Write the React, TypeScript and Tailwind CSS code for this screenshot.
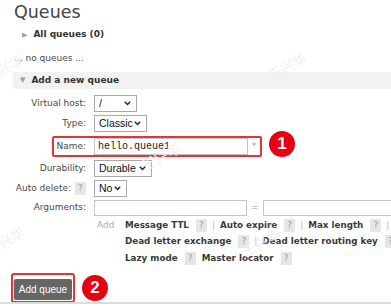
const args = [
  [
    { name: "Message TTL", sep: true },
    { name: "Auto expire", sep: true },
    { name: "Max length", sep: true },
  ],
  [
    { name: "Dead letter exchange", sep: true },
    { name: "Dead letter routing key", sep: false },
  ],
  [
    { name: "Lazy mode", sep: false },
    { name: "Master locator", sep: false },
  ],
];

const marks = [
  { x: -18, y: 58 },
  { x: 266, y: 56 },
  { x: 140, y: 146 },
  { x: -16, y: 230 },
  { x: 240, y: 232 },
];

function Help() {
  return (
    <span className="inline-flex shrink-0 items-center justify-center w-[11px] h-[13px] bg-[#e6e6e6] text-[#9a9a9a] text-[9px] font-normal">
      ?
    </span>
  );
}

function Chevron() {
  return (
    <svg width="7" height="5" viewBox="0 0 7 5" className="shrink-0">
      <path d="M0.8 0.8 L3.5 3.6 L6.2 0.8" fill="none" stroke="#222" strokeWidth="1.4" />
    </svg>
  );
}

function Select({ value, width }: { value: string; width: string }) {
  return (
    <div
      className={`${width} h-[17px] border border-[#a9a9a9] bg-white flex items-center justify-between pl-[4px] pr-[5px] font-['Liberation_Sans',Arial,sans-serif] text-[10.5px] text-[#111]`}
    >
      <span>{value}</span>
      <Chevron />
    </div>
  );
}

function Row({
  label,
  help,
  top,
  children,
}: {
  label: string;
  help?: boolean;
  top: string;
  children: React.ReactNode;
}) {
  return (
    <div className={`flex items-center ${top}`}>
      <div className="w-[86px] shrink-0 flex justify-end items-center gap-[4px] text-[9px] text-[#484848]">
        <span>{label}</span>
        {help && <Help />}
      </div>
      <div className="ml-[8px] flex items-center shrink-0">{children}</div>
    </div>
  );
}

export default function App() {
  return (
    <div className="relative w-[391px] h-[306px] overflow-hidden bg-white font-['Verdana','DejaVu_Sans',sans-serif] text-[#484848]">
      {/* watermark */}
      {marks.map((m, i) => (
        <span
          key={i}
          className="absolute pointer-events-none text-[14px] text-[#efefef] -rotate-[28deg] font-['Noto_Sans_CJK_SC',sans-serif] z-10"
          style={{ left: m.x, top: m.y }}
        >
          王兴华
        </span>
      ))}

      <div className="pl-[14px]">
        <h1 className="text-[17.5px] leading-[22px] pt-[1px] text-[#444]">Queues</h1>
        <div className="flex items-center h-[16px] mt-[4px] pl-[8px] gap-[6px]">
          <span className="text-[7px] text-[#a0a0a0]">&#9654;</span>
          <span className="text-[9px] font-bold text-[#333]">All queues (0)</span>
        </div>
        <p className="mt-[8px] h-[14px] text-[9px] leading-[14px]">... no queues ...</p>
      </div>

      <div className="ml-[13px] mt-[7px] h-[17px] bg-[#f2f2f2] flex items-center pl-[7px] gap-[6px]">
        <span className="text-[7px] text-[#a0a0a0]">&#9660;</span>
        <span className="text-[9px] font-bold text-[#333]">Add a new queue</span>
      </div>

      <Row label="Virtual host:" top="mt-[6px]">
        <Select value="/" width="w-[43px]" />
      </Row>
      <Row label="Type:" top="mt-[3px]">
        <Select value="Classic" width="w-[53px]" />
      </Row>
      <div className="relative mt-[6px]">
        <Row label="Name:" top="mt-0">
          <div className="w-[154px] h-[17px] border border-[#c4c4c4] bg-white flex items-center pl-[3px] font-['Liberation_Mono',monospace] text-[10px] text-[#222]">
            hello.queue1
          </div>
          <span className="ml-[4px] text-[9px] text-[#f08080]">*</span>
        </Row>
        <div className="absolute left-[52px] top-[-2px] w-[210px] h-[21px] border-2 border-[#e0363a] rounded-[2px]" />
        <div className="absolute left-[269px] top-[-7px] w-[26px] h-[26px] rounded-full bg-[#e60012] flex items-center justify-center text-white font-bold text-[17px] font-['Liberation_Sans',Arial,sans-serif]">
          1
        </div>
      </div>
      <Row label="Durability:" top="mt-[5px]">
        <Select value="Durable" width="w-[58px]" />
      </Row>
      <Row label="Auto delete:" help top="mt-[3px]">
        <Select value="No" width="w-[33px]" />
      </Row>
      <Row label="Arguments:" top="mt-[3px]">
        <div className="w-[153px] h-[16px] border border-[#c4c4c4] bg-white" />
        <span className="mx-[4px] text-[9px] text-[#999]">=</span>
        <div className="w-[140px] h-[16px] border border-[#c4c4c4] bg-white" />
      </Row>

      <div className="mt-[1px] flex">
        <div className="w-[97px] shrink-0" />
        <span className="shrink-0 text-[9px] text-[#aaa] h-[17px] leading-[17px] w-[28px]">Add</span>
        <div className="flex flex-col shrink-0">
          {args.map((row, r) => (
            <div key={r} className="h-[16.5px] flex items-center whitespace-nowrap text-[8.75px] font-bold text-[#3a3a3a]">
              {row.map((a) => (
                <span key={a.name} className="flex items-center shrink-0">
                  <span>{a.name}</span>
                  <span className="ml-[7px] flex">
                    <Help />
                  </span>
                  {a.sep ? (
                    <span className="mx-[5px] text-[#bbb] font-normal">|</span>
                  ) : (
                    <span className="w-[6px]" />
                  )}
                </span>
              ))}
            </div>
          ))}
        </div>
      </div>

      <div className="mt-[6px] ml-[11px] flex items-center">
        <div className="border-2 border-[#e0363a] rounded-[3px] p-px">
          <button className="w-[58px] h-[21px] rounded-[2px] bg-[#666] text-white text-[10px] font-['Liberation_Sans',Arial,sans-serif]">
            Add queue
          </button>
        </div>
        <div className="ml-[7px] w-[26px] h-[26px] rounded-full bg-[#e60012] flex items-center justify-center text-white font-bold text-[17px] font-['Liberation_Sans',Arial,sans-serif]">
          2
        </div>
      </div>

      <div className="absolute left-0 right-0 top-[302px] h-[2px] bg-[#dcdcdc]" />
    </div>
  );
}
